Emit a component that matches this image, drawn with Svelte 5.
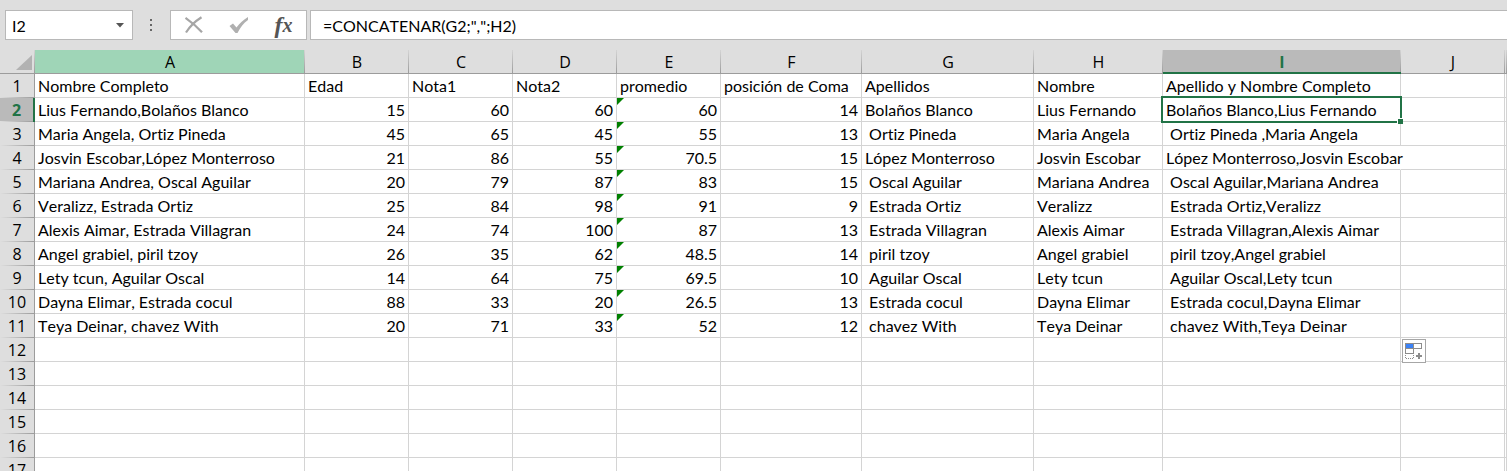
<script>
	const columns = ['A', 'B', 'C', 'D', 'E', 'F', 'G', 'H', 'I', 'J', 'K'];

	const data = [
		['Nombre Completo', 'Edad', 'Nota1', 'Nota2', 'promedio', 'posición de Coma', 'Apellidos', 'Nombre', 'Apellido y Nombre Completo'],
		['Lius Fernando,Bolaños Blanco', 15, 60, 60, 60, 14, 'Bolaños Blanco', 'Lius Fernando', 'Bolaños Blanco,Lius Fernando'],
		['Maria Angela, Ortiz Pineda', 45, 65, 45, 55, 13, ' Ortiz Pineda', 'Maria Angela', ' Ortiz Pineda ,Maria Angela'],
		['Josvin Escobar,López Monterroso', 21, 86, 55, 70.5, 15, 'López Monterroso', 'Josvin Escobar', 'López Monterroso,Josvin Escobar'],
		['Mariana Andrea, Oscal Aguilar', 20, 79, 87, 83, 15, ' Oscal Aguilar', 'Mariana Andrea', ' Oscal Aguilar,Mariana Andrea'],
		['Veralizz, Estrada Ortiz', 25, 84, 98, 91, 9, ' Estrada Ortiz', 'Veralizz', ' Estrada Ortiz,Veralizz'],
		['Alexis Aimar, Estrada Villagran', 24, 74, 100, 87, 13, ' Estrada Villagran', 'Alexis Aimar', ' Estrada Villagran,Alexis Aimar'],
		['Angel grabiel, piril tzoy', 26, 35, 62, 48.5, 14, ' piril tzoy', 'Angel grabiel', ' piril tzoy,Angel grabiel'],
		['Lety tcun, Aguilar Oscal', 14, 64, 75, 69.5, 10, ' Aguilar Oscal', 'Lety tcun', ' Aguilar Oscal,Lety tcun'],
		['Dayna Elimar, Estrada cocul', 88, 33, 20, 26.5, 13, ' Estrada cocul', 'Dayna Elimar', ' Estrada cocul,Dayna Elimar'],
		['Teya Deinar, chavez With', 20, 71, 33, 52, 12, ' chavez With', 'Teya Deinar', ' chavez With,Teya Deinar']
	];

	const rows = Array.from({ length: 17 }, (_, i) => data[i] ?? []);

	let selected = $state({ row: 2, col: 'I' });
	let cellName = $state('I2');
	let formula = $state('=CONCATENAR(G2;",";H2)');

	function select(row, col) {
		selected = { row, col };
		cellName = col + row;
		formula = String(data[row - 1]?.[columns.indexOf(col)] ?? '');
	}

	const isSelected = (row, col) => selected.row === row && selected.col === col;
</script>

<div class="app">
	<div class="bar">
		<div class="box namebox">
			<input aria-label="Cuadro de nombres" bind:value={cellName} />
			<button class="arrow" aria-label="Abrir nombres">
				<svg width="8" height="5" viewBox="0 0 8 5"><path d="M0 0h8L4 4.5z" fill="#555" /></svg>
			</button>
		</div>
		<svg class="dots" width="2" height="12" viewBox="0 0 2 12">
			<path d="M0 0h2v2H0zM0 5h2v2H0zM0 10h2v2H0z" fill="#666" />
		</svg>
		<div class="box tools">
			<button aria-label="Cancelar">
				<svg width="20" height="18" viewBox="0 0 20 18">
					<path d="M1.5 1.8C6 5 12 9.5 18 16.2" stroke="#a6a6a6" stroke-width="2.2" fill="none" />
					<path d="M17.5 1.2C11.5 5 6 10 2 16.5" stroke="#a6a6a6" stroke-width="2.2" fill="none" />
				</svg>
			</button>
			<button aria-label="Introducir">
				<svg width="20" height="18" viewBox="0 0 20 18">
					<path d="M0.5 10L4 7.5l3.500 4C10.500 7.500 14.500 3.500 19 1v3C14.500 7 11.500 11.500 8.500 17h-2z" fill="#b0b0b0" />
				</svg>
			</button>
			<button class="fx" aria-label="Insertar función"><span>f</span><span class="x">x</span></button>
		</div>
		<div class="box formula">
			<input aria-label="Barra de fórmulas" bind:value={formula} />
		</div>
	</div>

	<div class="sheet">
		<table>
			<colgroup>
				<col class="nums" />
				{#each columns as c}<col class="col-{c}" />{/each}
			</colgroup>
			<thead>
				<tr>
					<th class="corner">
						<svg width="16" height="15" viewBox="0 0 16 15"><path d="M16 0v15H0z" fill="#b2b2b2" /></svg>
					</th>
					{#each columns as c}
						<th scope="col" class:current={selected.col === c} class:hover={c === 'A'}>{c === 'K' ? '' : c}</th>
					{/each}
				</tr>
			</thead>
			<tbody>
				{#each rows as row, r}
					<tr>
						<th scope="row" class:current={selected.row === r + 1}>{r + 1}</th>
						{#each columns as c, i}
							<td
								class:num={typeof row[i] === 'number'}
								class:warn={c === 'E' && typeof row[i] === 'number'}
								class:spill={c === 'I' && r === 3}
								onclick={() => select(r + 1, c)}
							>{row[i] ?? ''}{#if isSelected(r + 1, c)}<span class="cursor"></span>{/if}{#if c === 'J' && r === 11}<button class="autofill" aria-label="Opciones de autorrelleno">
									<svg width="22" height="22" viewBox="0 0 22 22" shape-rendering="crispEdges">
										<path d="M3 4h7v4H3z" fill="#3b82f6" />
										<path d="M2.5 3.5h16v5h-16zM10.5 3.5v5M2.5 8.5v5h8v-5" fill="none" stroke="#8c8c8c" />
										<path d="M2.5 15v3.5h8V15" fill="none" stroke="#8c8c8c" stroke-dasharray="1 1" />
										<path d="M15 13h2v2h2v2h-2v2h-2v-2h-2v-2h2z" fill="#8c8c8c" />
									</svg>
								</button>{/if}</td>
						{/each}
					</tr>
				{/each}
			</tbody>
		</table>
	</div>
</div>

<style>
	:global(body) { margin: 0; }
	.app {
		display: flex;
		flex-direction: column;
		height: 100vh;
		overflow: hidden;
		background: #dedede;
		color: #000;
		font-family: Lato, sans-serif;
		font-size: 16px;
		font-kerning: none;
		font-variant-ligatures: none;
	}
	button, input {
		margin: 0;
		padding: 0;
		border: 0;
		background: none;
		color: inherit;
		font: inherit;
		font-kerning: inherit;
		font-variant-ligatures: inherit;
		outline: none;
	}
	button {
		display: flex;
		align-items: center;
		justify-content: center;
	}
	svg { display: block; }

	.bar {
		display: flex;
		align-items: center;
		padding: 10px 0 10px 5px;
	}
	.box {
		display: flex;
		box-sizing: border-box;
		height: 30px;
		background: #fff;
		border: 1px solid #b8b8b8;
	}
	.namebox { width: 128px; }
	.namebox input { flex: 1; min-width: 0; padding-left: 6px; }
	.arrow { width: 24px; }
	.dots { margin: 0 18px 0 17px; }
	.tools { width: 137px; }
	.tools button { flex: 1; }
	.fx {
		font: italic bold 24px/24px 'Liberation Serif', serif;
		color: #555;
	}
	.fx .x { font-size: 20px; }
	.formula {
		flex: 1;
		margin-left: 3px;
		border-right: 0;
	}
	.formula input { flex: 1; padding-left: 12px; }

	.sheet {
		flex: 1;
		min-height: 0;
		overflow: hidden;
	}
	table {
		width: 100%;
		table-layout: fixed;
		border-collapse: separate;
		border-spacing: 0;
		background: #fff;
	}
	.nums { width: 35px; }
	.col-A { width: 270px; }
	.col-B, .col-C, .col-D, .col-E, .col-J { width: 104px; }
	.col-F { width: 141px; }
	.col-G { width: 172px; }
	.col-H { width: 129px; }
	.col-I { width: 238px; }

	th, td {
		box-sizing: border-box;
		height: 24px;
		padding: 0 3px;
		line-height: 23px;
		white-space: pre;
	}
	th {
		padding: 0;
		font-family: 'Open Sans', sans-serif;
		font-weight: normal;
		text-align: center;
	}
	thead th {
		padding-top: 2px;
		line-height: 21px;
		background: linear-gradient(#d4d4d4, #9c9c9c) right / 1px 100% no-repeat #dedede;
		border-bottom: 1px solid #9c9c9c;
	}
	thead th.hover { background-color: #9fd5b7; }
	thead th.current {
		background-color: #bababa;
		border-bottom: 2px solid #217346;
		line-height: 20px;
	}
	tbody th {
		background: linear-gradient(to right, #dedede, #9c9c9c) bottom / 100% 1px no-repeat #dedede;
		border-right: 1px solid #9c9c9c;
	}
	tbody th.current {
		background-color: #bababa;
		border-right: 2px solid #217346;
	}
	th.current { color: #217346; font-weight: bold; }
	.corner svg { margin: 0 3px 0 auto; }

	td {
		position: relative;
		border-right: 1px solid #d4d4d4;
		border-bottom: 1px solid #d4d4d4;
		cursor: cell;
	}
	.num { text-align: right; }
	.spill { border-right-color: transparent; }
	.warn::before {
		content: '';
		position: absolute;
		top: 0;
		left: 0;
		border-top: 7px solid #008000;
		border-right: 7px solid transparent;
	}
	.cursor {
		position: absolute;
		inset: -2px;
		border: 2px solid #217346;
		z-index: 1;
	}
	.cursor::after {
		content: '';
		position: absolute;
		right: -3px;
		bottom: -3px;
		width: 5px;
		height: 5px;
		background: #217346;
		border: solid #fff;
		border-width: 1px 0 0 1px;
	}
	.autofill {
		position: absolute;
		top: 1px;
		left: 1px;
		width: 24px;
		height: 24px;
		background: #fff;
		border: 1px solid #a6a6a6;
		z-index: 1;
	}
</style>
